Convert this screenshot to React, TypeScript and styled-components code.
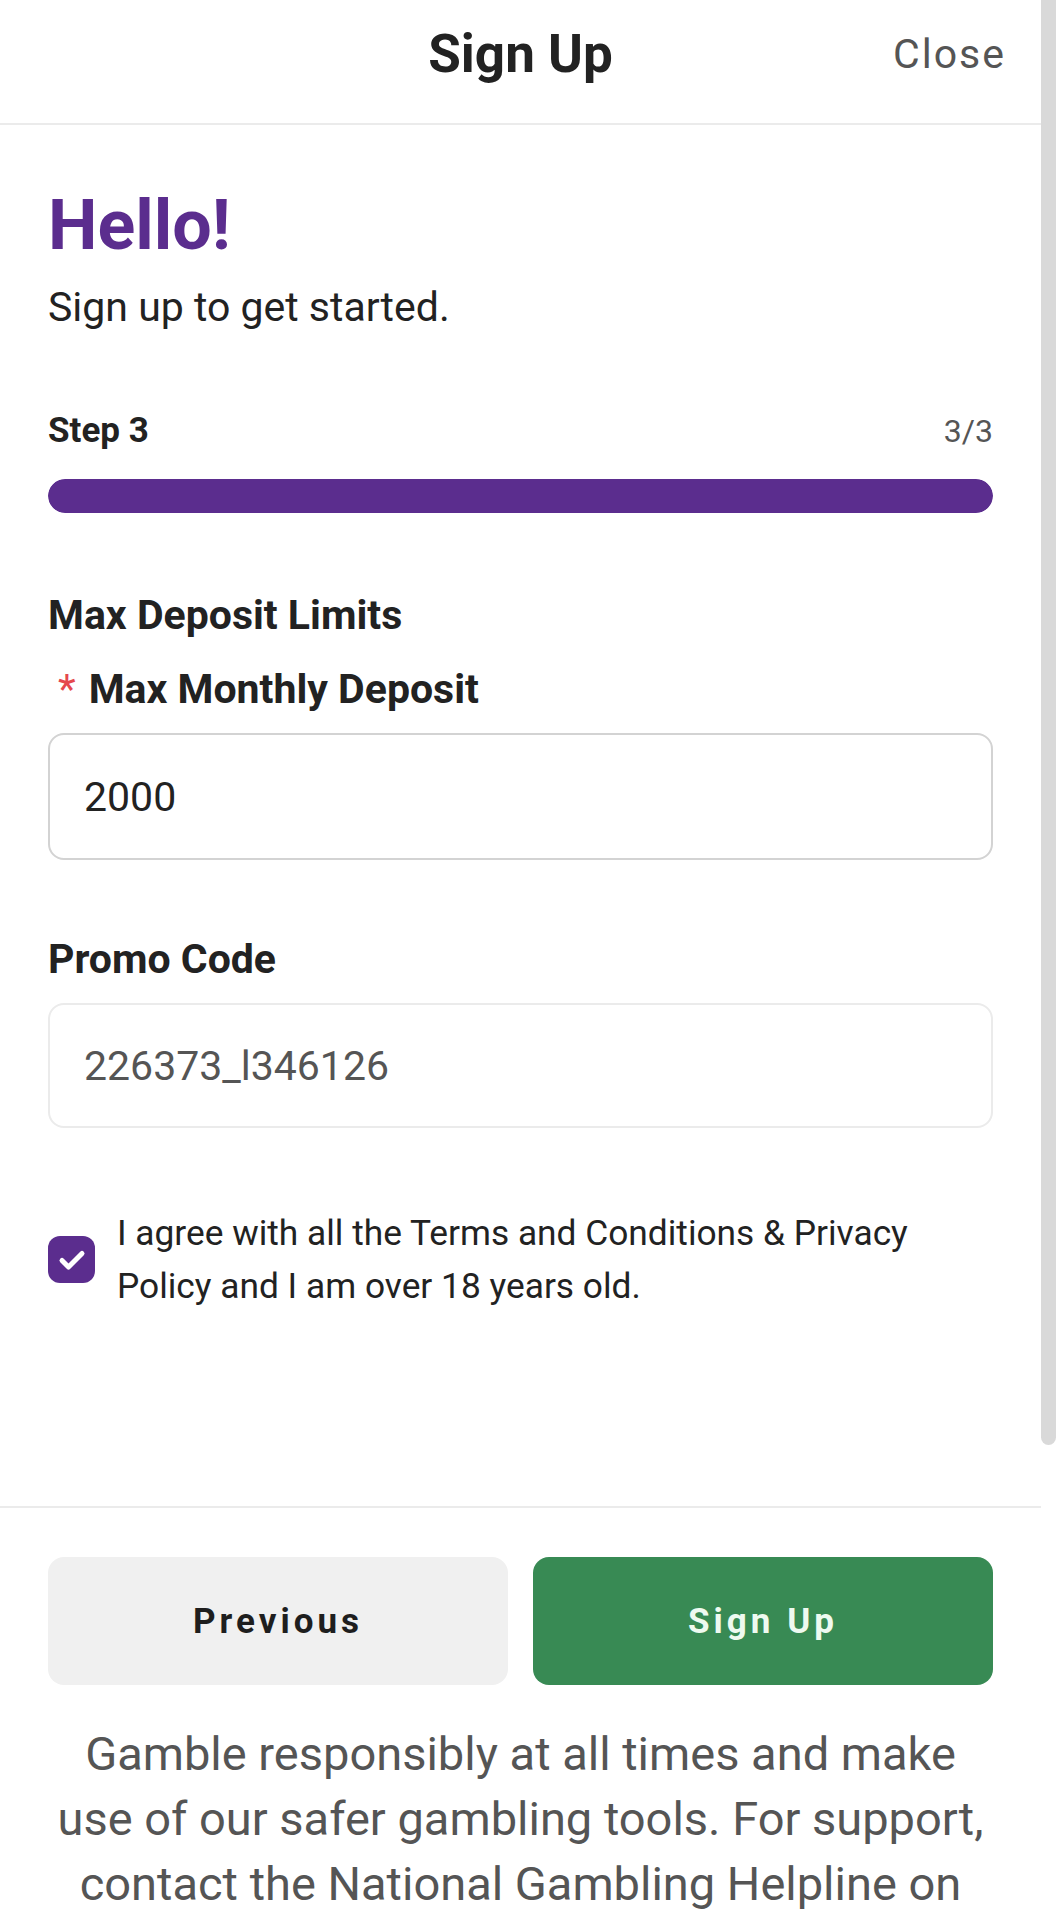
import React from "react";
import styled, { createGlobalStyle } from "styled-components";

const PURPLE = "#5b2d8e";
const GREEN = "#388a54";

const GlobalStyle = createGlobalStyle`
  html, body {
    margin: 0;
    padding: 0;
    height: 100%;
    overflow: hidden;
    background: #ffffff;
  }
  #root {
    height: 100%;
  }
  * {
    box-sizing: border-box;
  }
`;

const Frame = styled.div`
  height: 100vh;
  display: flex;
  background: #ffffff;
  font-family: Roboto, "Noto Sans", "Liberation Sans", sans-serif;
  color: #222222;
`;

const Scroller = styled.div`
  flex: 1;
  min-width: 0;
  overflow-y: auto;
  scrollbar-width: none;
  &::-webkit-scrollbar {
    display: none;
  }
`;

const ScrollRail = styled.div`
  flex: none;
  width: 15px;
  background: #ffffff;
`;

const ScrollThumb = styled.div`
  height: 1445px;
  border-radius: 0 0 8px 8px;
  background: #d9d9d9;
`;

const Page = styled.div`
  min-height: 2551px;
  display: flex;
  flex-direction: column;
`;

const Header = styled.header`
  height: 125px;
  display: grid;
  grid-template-columns: 1fr auto 1fr;
  align-items: start;
  border-bottom: 2px solid #ebebeb;
  padding: 0 35px;
`;

const HeaderTitle = styled.h1`
  grid-column: 2;
  margin: 22px 0 0;
  font-size: 53px;
  line-height: 64px;
  font-weight: 700;
  color: #222222;
`;

const CloseButton = styled.button`
  grid-column: 3;
  justify-self: end;
  margin-top: 30px;
  padding: 0;
  border: none;
  background: none;
  font-family: inherit;
  font-size: 41px;
  line-height: 48px;
  font-weight: 400;
  letter-spacing: 2px;
  color: #555555;
  cursor: pointer;
`;

const Main = styled.main`
  display: flex;
  flex-direction: column;
  padding: 59px 48px 194px;
`;

const Greeting = styled.h2`
  margin: 0;
  font-size: 70px;
  line-height: 82px;
  font-weight: 700;
  color: ${PURPLE};
`;

const Subtitle = styled.p`
  margin: 17px 0 0;
  font-size: 41px;
  line-height: 48px;
  color: #222222;
`;

const StepRow = styled.div`
  margin-top: 79px;
  display: flex;
  justify-content: space-between;
  align-items: baseline;
  height: 42px;
`;

const StepLabel = styled.span`
  font-size: 35px;
  line-height: 42px;
  font-weight: 700;
  color: #222222;
`;

const StepCount = styled.span`
  font-size: 32px;
  line-height: 36px;
  color: #555555;
`;

const ProgressTrack = styled.div`
  margin-top: 27px;
  height: 34px;
  border-radius: 17px;
  background: #ece6f3;
  overflow: hidden;
`;

const ProgressFill = styled.div`
  height: 100%;
  border-radius: 17px;
  background: ${PURPLE};
`;

const SectionTitle = styled.h3<{ $gap: number }>`
  margin: ${(p) => p.$gap}px 0 0;
  font-size: 41px;
  line-height: 46px;
  font-weight: 700;
  color: #222222;
`;

const FieldLabel = styled.label`
  margin-top: 27px;
  display: flex;
  align-items: baseline;
  padding-left: 10px;
  font-size: 41px;
  line-height: 48px;
  font-weight: 700;
  color: #222222;
`;

const Required = styled.span`
  margin-right: 13px;
  font-weight: 400;
  color: #e5484d;
`;

const TextInput = styled.input<{ $muted?: boolean; $gap: number }>`
  margin-top: ${(p) => p.$gap}px;
  width: 100%;
  height: ${(p) => (p.$muted ? 125 : 127)}px;
  padding: 0 34px;
  border: 2px solid ${(p) => (p.$muted ? "#ebebeb" : "#d3d3d3")};
  border-radius: 16px;
  background: #ffffff;
  font-family: inherit;
  font-size: 41px;
  color: ${(p) => (p.$muted ? "#555555" : "#222222")};
  outline: none;
`;

const AgreeRow = styled.label`
  margin-top: 79px;
  display: flex;
  align-items: center;
  gap: 22px;
`;

const CheckBox = styled.span`
  flex: none;
  width: 47px;
  height: 47px;
  border-radius: 12px;
  background: ${PURPLE};
  display: flex;
  align-items: center;
  justify-content: center;
`;

const AgreeText = styled.span`
  font-size: 35.3px;
  line-height: 52.6px;
  color: #222222;
  padding-right: 40px;
`;

const Footer = styled.footer`
  border-top: 2px solid #ebebeb;
  padding: 49px 48px 80px;
  display: flex;
  flex-direction: column;
`;

const ButtonRow = styled.div`
  display: flex;
  gap: 25px;
`;

const ActionButton = styled.button<{ $primary?: boolean }>`
  flex: 1;
  height: 128px;
  border: none;
  border-radius: 16px;
  background: ${(p) => (p.$primary ? GREEN : "#f0f0f0")};
  color: ${(p) => (p.$primary ? "#eefaf0" : "#1e1e1e")};
  font-family: inherit;
  font-size: 35px;
  font-weight: 700;
  letter-spacing: 4px;
  cursor: pointer;
`;

const Disclaimer = styled.p`
  margin: 36px 0 0;
  padding: 0 8px;
  text-align: center;
  font-size: 47px;
  line-height: 65px;
  color: #555555;
`;

function CheckIcon() {
  return (
    <svg width="30" height="30" viewBox="0 0 30 30" fill="none">
      <path
        d="M5 15.5l6.5 6.5L25 8.5"
        stroke="#ffffff"
        strokeWidth="5"
        strokeLinecap="round"
        strokeLinejoin="round"
      />
    </svg>
  );
}

export default function App() {
  const step = 3;
  const total = 3;
  return (
    <>
      <GlobalStyle />
      <Frame>
        <Scroller>
          <Page>
            <Header>
              <HeaderTitle>Sign Up</HeaderTitle>
              <CloseButton type="button">Close</CloseButton>
            </Header>

            <Main>
              <Greeting>Hello!</Greeting>
              <Subtitle>Sign up to get started.</Subtitle>

              <StepRow>
                <StepLabel>Step {step}</StepLabel>
                <StepCount>
                  {step}/{total}
                </StepCount>
              </StepRow>
              <ProgressTrack>
                <ProgressFill style={{ width: `${(step / total) * 100}%` }} />
              </ProgressTrack>

              <SectionTitle $gap={79}>Max Deposit Limits</SectionTitle>
              <FieldLabel htmlFor="monthly">
                <Required>*</Required>
                Max Monthly Deposit
              </FieldLabel>
              <TextInput id="monthly" $gap={20} defaultValue="2000" />

              <SectionTitle as="label" htmlFor="promo" $gap={76}>
                Promo Code
              </SectionTitle>
              <TextInput id="promo" $gap={21} $muted defaultValue="226373_l346126" />

              <AgreeRow>
                <CheckBox>
                  <CheckIcon />
                </CheckBox>
                <AgreeText>
                  I agree with all the Terms and Conditions &amp; Privacy Policy and I am over 18 years old.
                </AgreeText>
              </AgreeRow>
            </Main>

            <Footer>
              <ButtonRow>
                <ActionButton type="button">Previous</ActionButton>
                <ActionButton type="button" $primary>
                  Sign Up
                </ActionButton>
              </ButtonRow>
              <Disclaimer>
                Gamble responsibly at all times and make use of our safer gambling tools. For support,
                contact the National Gambling Helpline on 0808 8020 133 or visit BeGambleAware.org.
                18+ only. Please play responsibly.
              </Disclaimer>
            </Footer>
          </Page>
        </Scroller>
        <ScrollRail aria-hidden="true">
          <ScrollThumb />
        </ScrollRail>
      </Frame>
    </>
  );
}
